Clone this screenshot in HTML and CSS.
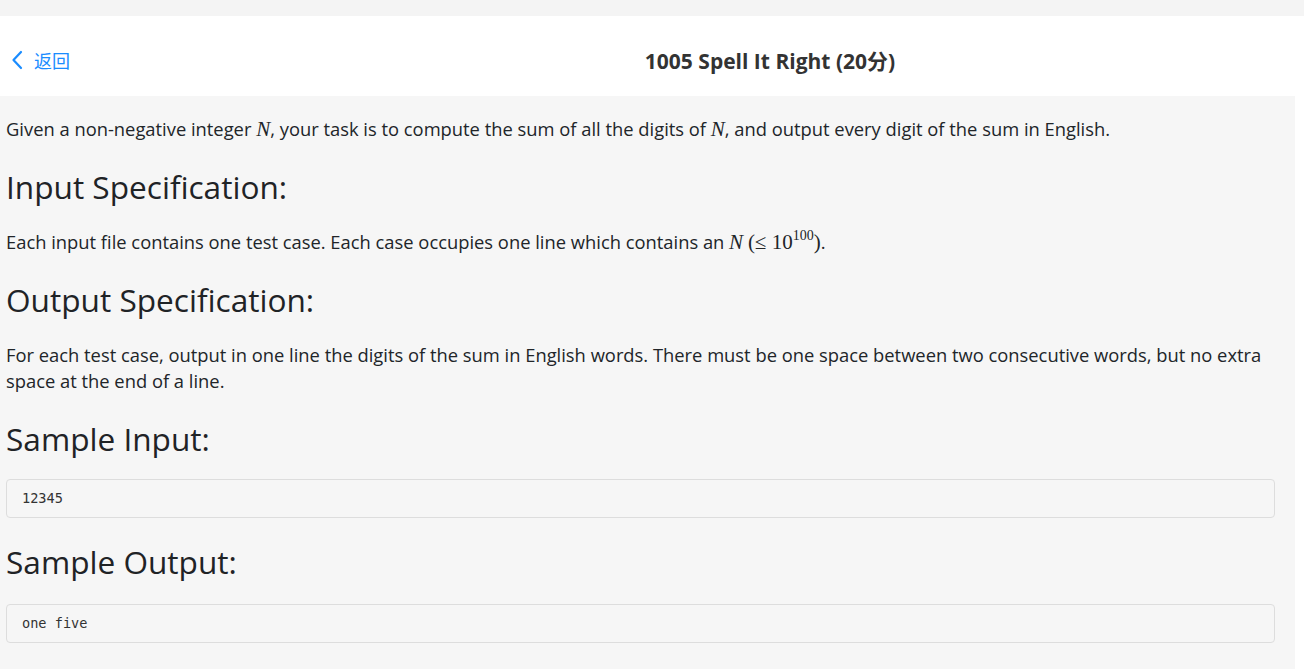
FILE: index.html
```html
<!DOCTYPE html>
<html lang="en">
<head>
<meta charset="utf-8">
<title>1005 Spell It Right</title>
<link rel="stylesheet" href="styles.css">
</head>
<body>
<div class="topstrip"></div>
<header class="header">
  <a class="back" href="#">
    <svg class="chev" width="12" height="20" viewBox="0 0 12 20"><path d="M10 2 L2.5 10 L10 18" fill="none" stroke="#1a8cff" stroke-width="2.2" stroke-linecap="round" stroke-linejoin="round"/></svg>
    <span class="back-text">返回</span>
  </a>
  <h1 class="title">1005 Spell It Right (20分)</h1>
</header>
<main class="content">
  <p class="para">Given a non-negative integer <span class="m">N</span>, your task is to compute the sum of all the digits of <span class="m">N</span>, and output every digit of the sum in English.</p>
  <h2 class="heading">Input Specification:</h2>
  <p class="para">Each input file contains one test case. Each case occupies one line which contains an <span class="m">N</span> <span class="mr">(≤ 10<sup class="sup">100</sup>)</span>.</p>
  <h2 class="heading">Output Specification:</h2>
  <p class="para">For each test case, output in one line the digits of the sum in English words. There must be one space between two consecutive words, but no extra space at the end of a line.</p>
  <h2 class="heading heading-code">Sample Input:</h2>
  <pre class="code">12345</pre>
  <h2 class="heading after-code">Sample Output:</h2>
  <pre class="code">one five</pre>
</main>
</body>
</html>
```
FILE: styles.css
```css
html, body {
  margin: 0;
  padding: 0;
}
body {
  background: #ffffff;
  font-family: "Open Sans", "Noto Sans CJK SC", sans-serif;
  color: #212529;
  width: 1304px;
  height: 669px;
  overflow: hidden;
}
.topstrip {
  height: 16px;
  background: #f4f4f4;
}
.header {
  height: 80px;
  box-sizing: border-box;
  padding-top: 7px;
  background: #ffffff;
  display: flex;
  align-items: center;
}
.back {
  width: 236px;
  display: flex;
  align-items: center;
  text-decoration: none;
  color: #1a8cff;
  padding-left: 11px;
  box-sizing: border-box;
}
.chev {
  display: block;
}
.back-text {
  margin-left: 11px;
  font-family: "Noto Sans CJK SC", sans-serif;
  font-size: 18px;
}
.title {
  flex: 1;
  text-align: center;
  margin: 0;
  font-size: 21px;
  font-weight: 700;
  color: #333333;
  font-family: "Open Sans", "Noto Sans CJK SC", sans-serif;
}
.content {
  width: 1295px;
  box-sizing: border-box;
  background: #f6f6f6;
  padding: 20px 20px 30px 6px;
  min-height: 573px;
}
.para {
  margin: 0;
  font-size: 18.35px;
  line-height: 26px;
}
.m {
  font-family: "Liberation Serif", serif;
  font-style: italic;
  font-size: 21px;
}
.mr {
  font-family: "Liberation Serif", serif;
  font-size: 21px;
}
.sup {
  font-size: 14px;
  line-height: 0;
  vertical-align: 9px;
}
.heading {
  margin: 26px 0 23px;
  font-size: 31.6px;
  font-weight: 400;
  line-height: 38px;
  color: #1f2326;
}
.heading-code {
  margin-bottom: 21px;
}
.after-code {
  margin-top: 25px;
  margin-bottom: 23px;
}
.code {
  margin: 0;
  height: 39px;
  box-sizing: border-box;
  border: 1px solid #dddddd;
  border-radius: 4px;
  background: #f6f6f6;
  padding: 0 15px;
  font-family: "DejaVu Sans Mono", monospace;
  font-size: 13.6px;
  line-height: 37px;
  color: #333333;
}
```
